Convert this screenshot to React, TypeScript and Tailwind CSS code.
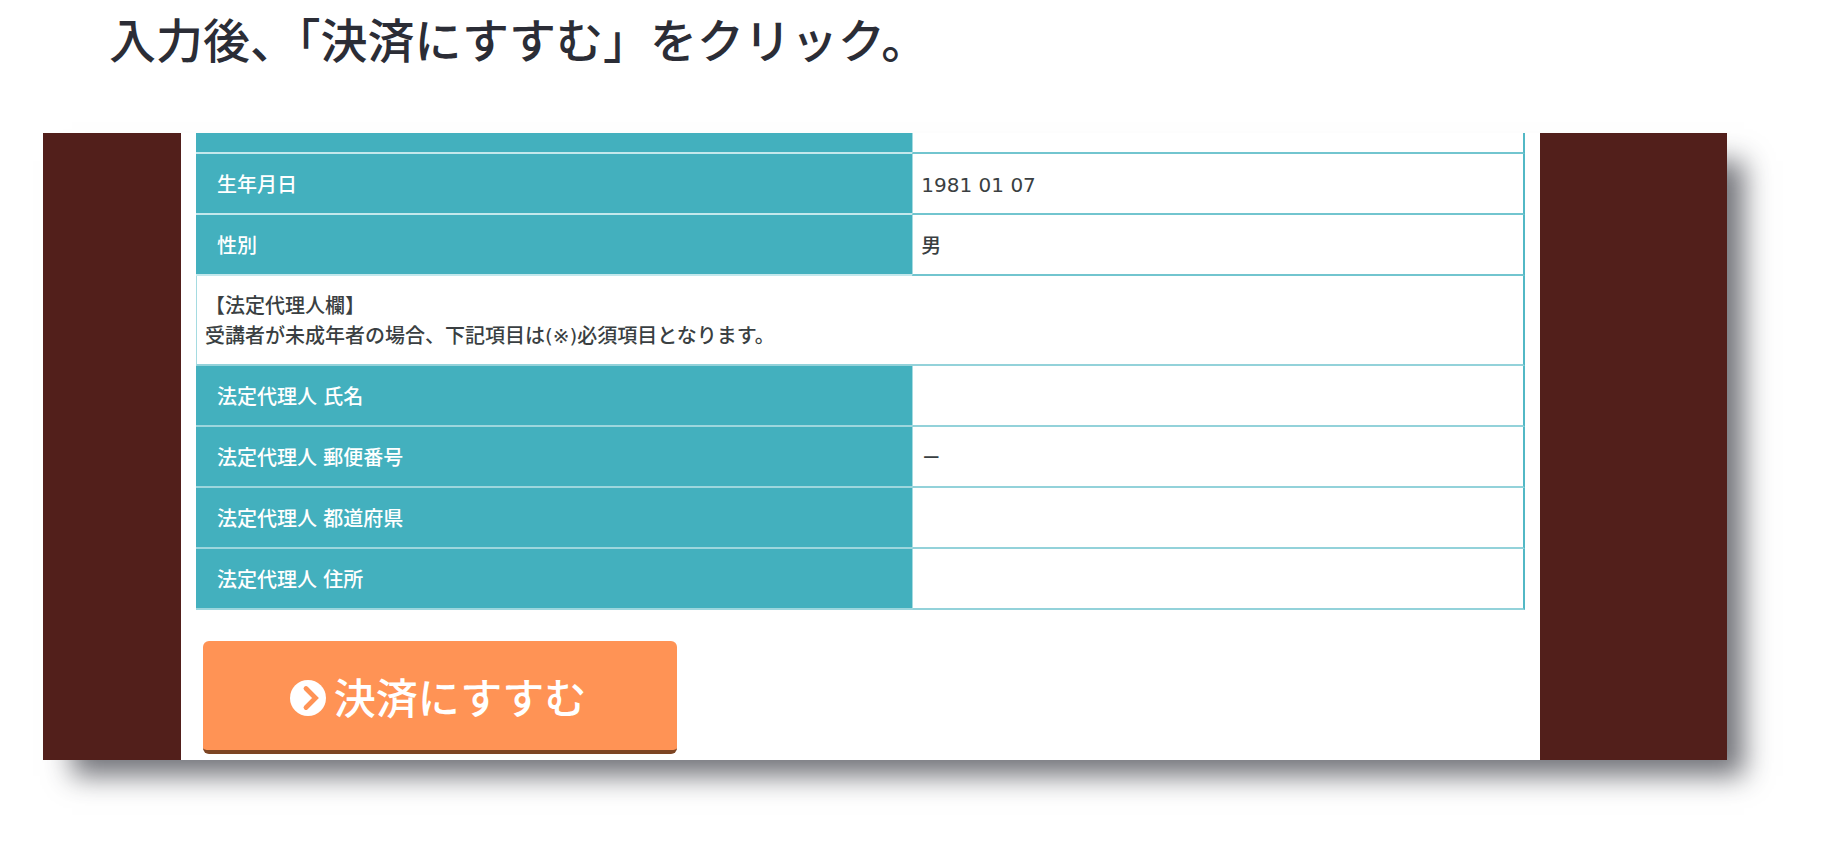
type Row = {
  label: string;
  value: string;
};

const userRows: Row[] = [
  { label: "生年月日", value: "1981 01 07" },
  { label: "性別", value: "男" },
];

const guardianRows: Row[] = [
  { label: "法定代理人 氏名", value: "" },
  { label: "法定代理人 郵便番号", value: "－" },
  { label: "法定代理人 都道府県", value: "" },
  { label: "法定代理人 住所", value: "" },
];

function UserRow({ label, value }: Row) {
  return (
    <tr className="h-[61px]">
      <th
        scope="row"
        className="border-b-2 border-[#c4e8ec] bg-[#43b0be] pt-0.5 pl-[21px] text-left font-medium text-white"
      >
        {label}
      </th>
      <td className="border-b-2 border-l border-r-2 border-b-[#72c5cf] border-l-[#a5dbe1] border-r-[#52b8c5] pt-0.5 pl-2">
        {value}
      </td>
    </tr>
  );
}

function GuardianRow({ label, value }: Row) {
  return (
    <tr className="h-[61px]">
      <th
        scope="row"
        className="border-b-2 border-[#9dd6dd] bg-[#43b0be] pt-0.5 pl-[21px] text-left font-medium text-white"
      >
        {label}
      </th>
      <td className="border-b-2 border-l border-r-2 border-b-[#93d2da] border-l-[#a5dbe1] border-r-[#52b8c5] pt-0.5 pl-2">
        {value}
      </td>
    </tr>
  );
}

function CircleChevron() {
  return (
    <svg viewBox="0 0 36 36" className="mt-1 size-9" aria-hidden="true">
      <circle cx="18" cy="18" r="18" fill="#fff" />
      <path
        d="M16 8.5l9.5 9.5-9.5 9.5"
        fill="none"
        stroke="#ff9355"
        strokeWidth="4.8"
        strokeLinecap="round"
        strokeLinejoin="miter"
      />
    </svg>
  );
}

export default function App() {
  return (
    <main
      lang="ja"
      className="min-h-screen bg-white pb-20 font-['DejaVu_Sans','Noto_Sans_CJK_JP',sans-serif]"
    >
      <h1 className="pt-2 pl-[109px] font-['Noto_Sans_CJK_JP',sans-serif] text-[47px] leading-[60px] font-medium text-[#2b2d36]">
        入力後、「決済にすすむ」をクリック。
      </h1>

      <section className="mt-[65px] mr-[119px] ml-[43px] bg-[#521f1b] pr-[187px] pl-[138px] shadow-[23px_22px_26px_-6px_rgba(40,42,50,0.65)]">
        <div className="bg-white px-[15px] pb-1.5">
          <table className="w-full table-fixed border-separate border-spacing-0 text-xl leading-[30px] font-medium text-[#3a3f42]">
            <colgroup>
              <col className="w-[53.9%]" />
              <col />
            </colgroup>
            <tbody>
              {/* 前の項目の下端 */}
              <tr className="h-[21px]">
                <td className="border-b-2 border-[#c4e8ec] bg-[#43b0be]" />
                <td className="border-b-2 border-l border-r-2 border-b-[#72c5cf] border-l-[#a5dbe1] border-r-[#52b8c5]" />
              </tr>
              {userRows.map((row) => (
                <UserRow key={row.label} {...row} />
              ))}
              <tr className="h-[90px]">
                <td
                  colSpan={2}
                  className="border-r-2 border-b-2 border-l border-r-[#52b8c5] border-b-[#93d2da] border-l-[#a5dbe1] pt-0.5 pl-2"
                >
                  【法定代理人欄】
                  <br />
                  受講者が未成年者の場合、下記項目は(※)必須項目となります。
                </td>
              </tr>
              {guardianRows.map((row) => (
                <GuardianRow key={row.label} {...row} />
              ))}
            </tbody>
          </table>

          <button
            type="button"
            className="mt-[31px] ml-[7px] flex h-[113px] w-[474px] items-center justify-center gap-2 rounded-md border-b-4 border-[#7d4523] bg-[#ff9355] pr-1 font-['Noto_Sans_CJK_JP',sans-serif] text-[42px] font-medium text-white"
          >
            <CircleChevron />
            決済にすすむ
          </button>
        </div>
      </section>
    </main>
  );
}
